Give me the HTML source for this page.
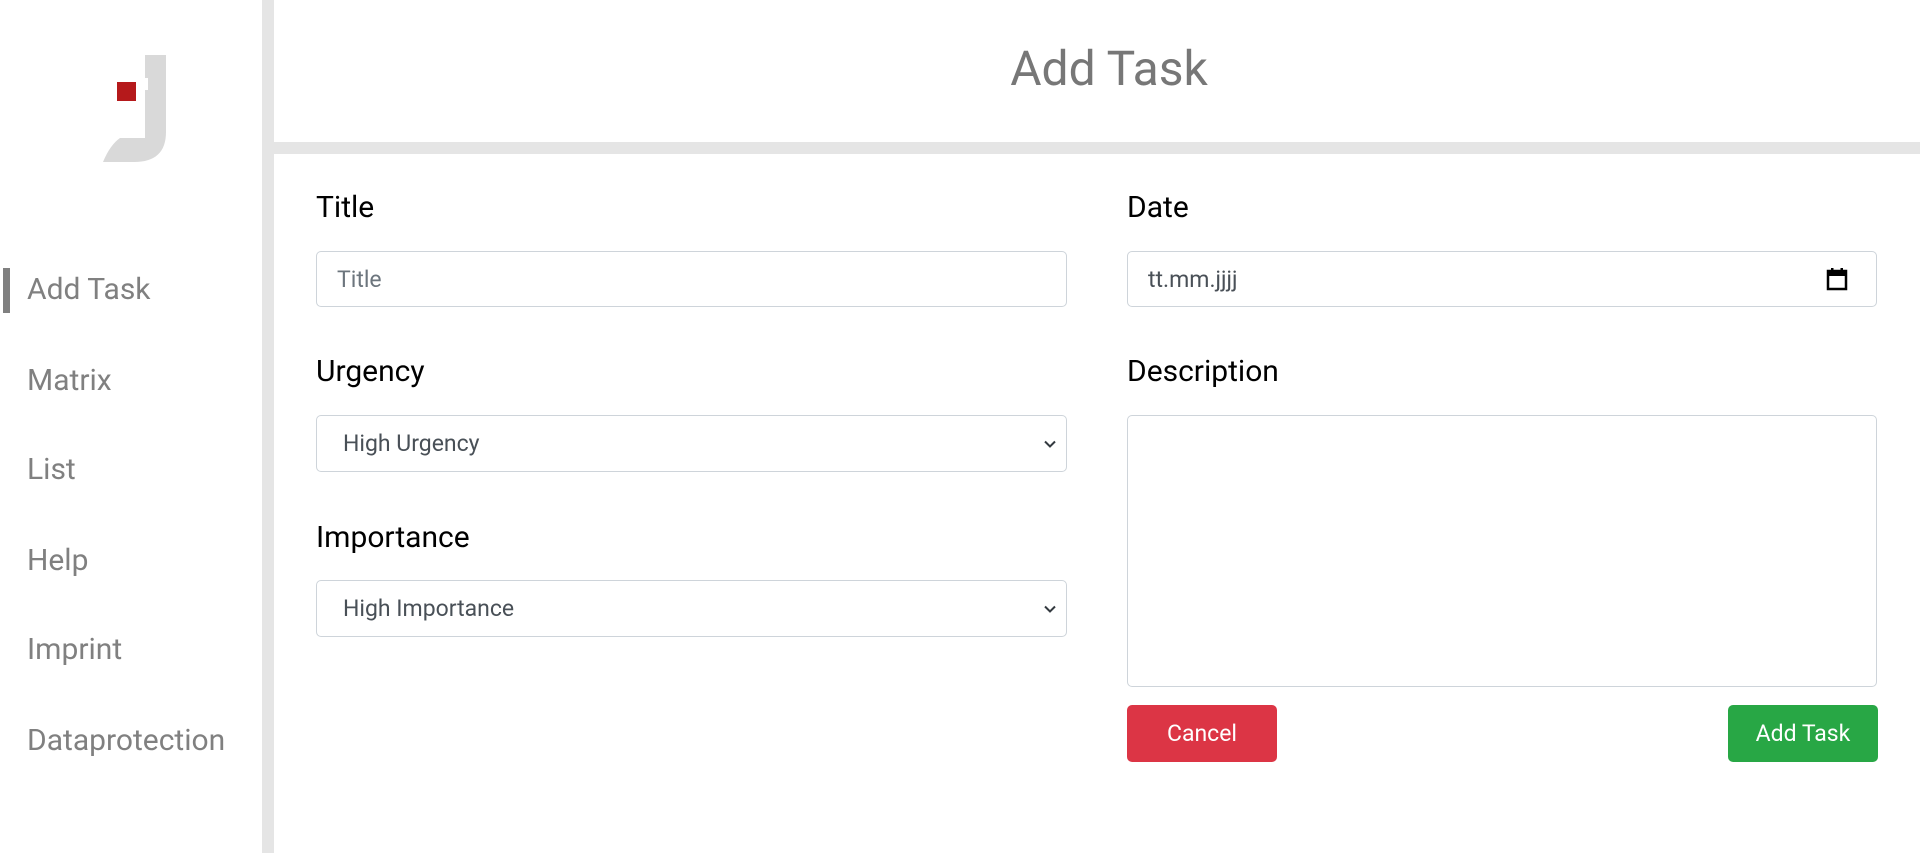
<!DOCTYPE html>
<html><head><meta charset="utf-8"><style>
*{box-sizing:border-box;margin:0;padding:0}
body{width:1920px;height:853px;background:#fff;font-family:"Roboto","Liberation Sans",sans-serif;position:relative;overflow:hidden}
.side{position:absolute;left:262px;top:0;width:12px;height:853px;background:#e5e5e5}
.hb{position:absolute;left:274px;top:142px;right:0;height:12px;background:#e5e5e5}
h1{position:absolute;left:298px;right:0;top:40px;text-align:center;font-weight:400;font-size:48px;color:#777}
.nav{position:absolute;left:27px;font-size:30px;color:#808080}
.ind{position:absolute;left:3px;top:268px;width:7px;height:45px;background:#808080}
.lbl{position:absolute;font-size:30px;color:#000}
.in{position:absolute;border:1px solid #ced4da;border-radius:5px;background:#fff;font-size:23px;color:#495057;padding-left:26px;display:flex;align-items:center}
.btn{position:absolute;border-radius:5px;color:#fff;font-size:23px;display:flex;align-items:center;justify-content:center}
.chev{position:absolute;right:10px;top:24px}
</style></head><body>
<svg style="position:absolute;left:0;top:0" width="200" height="200">
<path d="M145 55 H166 V132 Q166 162 134 162 H103 Q110 145 120 138 H145 Z" fill="#d9d9d9"/>
<rect x="137" y="78" width="11" height="12" fill="#fff"/>
<rect x="117" y="82" width="19" height="19" fill="#b5191b"/>
</svg>
<div class="side"></div><div class="hb"></div>
<h1>Add Task</h1>
<div class="ind"></div>
<div class="nav" style="top:272px">Add Task</div>
<div class="nav" style="top:363px">Matrix</div>
<div class="nav" style="top:452px">List</div>
<div class="nav" style="top:543px">Help</div>
<div class="nav" style="top:632px">Imprint</div>
<div class="nav" style="top:723px">Dataprotection</div>

<div class="lbl" style="left:316px;top:190px">Title</div>
<div class="in" style="left:316px;top:251px;width:751px;height:56px;color:#6c757d;padding-left:20px">Title</div>
<div class="lbl" style="left:316px;top:354px">Urgency</div>
<div class="in" style="left:316px;top:415px;width:751px;height:57px">High Urgency<svg class="chev" width="12" height="8" viewBox="0 0 12 8"><path d="M1 1.5 L6 6.5 L11 1.5" fill="none" stroke="#343a40" stroke-width="2"/></svg></div>
<div class="lbl" style="left:316px;top:520px">Importance</div>
<div class="in" style="left:316px;top:580px;width:751px;height:57px">High Importance<svg class="chev" width="12" height="8" viewBox="0 0 12 8"><path d="M1 1.5 L6 6.5 L11 1.5" fill="none" stroke="#343a40" stroke-width="2"/></svg></div>

<div class="lbl" style="left:1127px;top:190px">Date</div>
<div class="in" style="left:1127px;top:251px;width:750px;height:56px;padding-left:20px">tt.mm.jjjj
<svg style="position:absolute;right:28px;top:15px" width="22" height="24" viewBox="0 0 22 24"><rect x="2" y="4" width="18" height="18" fill="none" stroke="#000" stroke-width="2.5"/><rect x="2" y="4" width="18" height="5" fill="#000"/><rect x="5" y="1" width="2.5" height="4" fill="#000"/><rect x="14.5" y="1" width="2.5" height="4" fill="#000"/></svg></div>
<div class="lbl" style="left:1127px;top:354px">Description</div>
<div class="in" style="left:1127px;top:415px;width:750px;height:272px"></div>
<div class="btn" style="left:1127px;top:705px;width:150px;height:57px;background:#dc3545">Cancel</div>
<div class="btn" style="left:1728px;top:705px;width:150px;height:57px;background:#28a745">Add Task</div>
</body></html>
